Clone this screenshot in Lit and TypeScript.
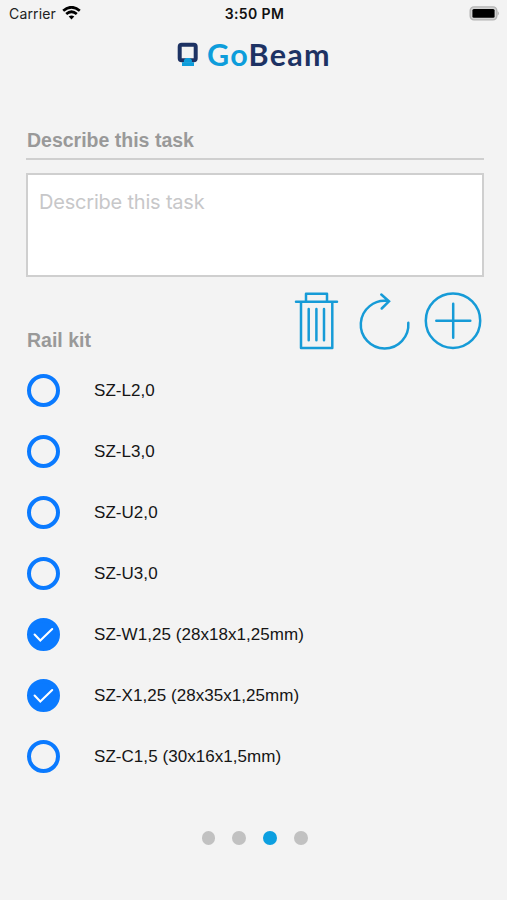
import { LitElement, html, css, svg } from "lit";
import { customElement, state } from "lit/decorators.js";
import { classMap } from "lit/directives/class-map.js";

interface Item { label: string; checked: boolean; }

@customElement("status-bar")
class StatusBar extends LitElement {
  static styles = css`
    :host { display: grid; grid-template-columns: 1fr auto 1fr; align-items: center; height: 28px; padding: 0 7px 0 9px;
      box-sizing: border-box; font: 14px/28px Inter, sans-serif; color: #222; }
    .carrier { display: flex; align-items: center; gap: 6px; letter-spacing: 0.15px; }
    .time { font-weight: 600; letter-spacing: 0.4px; color: #111; }
    .battery { justify-self: end; }
    svg { display: block; }
    .wifi { margin-top: -3px; }
    .battery { margin-top: -2px; }
  `;
  render() {
    return html`
      <div class="carrier"><span>Carrier</span>
        <svg class="wifi" width="19" height="14" viewBox="0 0 19 14" fill="none" stroke="#000" stroke-width="2.7">
          <path d="M1.2 4.8Q9.5-2.3 17.8 4.8"/><path d="M4.2 8Q9.5 3.5 14.8 8"/>
          <path d="M6.7 10.6Q9.5 8.3 12.3 10.6L9.5 13.6Z" fill="#000" stroke="none"/>
        </svg>
      </div>
      <div class="time">3:50 PM</div>
      <svg class="battery" width="31" height="15" viewBox="0 0 31 15">
        <rect x="1.2" y=".9" width="26.6" height="13" rx="3.8" fill="#d2d2d2" stroke="#b4b4b4" stroke-width="1.4"/>
        <rect x="3.4" y="3" width="22.2" height="8.8" rx="1.5" fill="#000"/>
        <path d="M28.7 5Q31 7.4 28.7 9.8Z" fill="#aaa"/>
      </svg>`;
  }
}

@customElement("brand-logo")
class BrandLogo extends LitElement {
  static styles = css`
    :host { display: flex; height: 50px; padding-left: 177px; align-items: flex-start; }
    svg { display: block; margin-top: 14px; flex: none; }
    .name { margin-left: 9px; font: 700 30.5px/36px Lato, sans-serif; margin-top: 8px; letter-spacing: 1.25px; color: #1d3263; }
    .go { color: #0d9ddb; }
  `;
  render() {
    return html`
      <svg width="21" height="25" viewBox="0 0 21 25">
        <rect x="2.7" y="2.7" width="16" height="15.6" rx="2" fill="none" stroke="#1d3263" stroke-width="4"/>
        <path d="M6.9 18 8.9 16h3.8l2.2 2v2.6h-8Z" fill="#0d9ddb"/>
        <path d="M5 20.2h12v3.8H5Z" fill="#0d9ddb"/>
      </svg>
      <div class="name"><span class="go">Go</span>Beam</div>`;
  }
}

@customElement("app-root")
class AppRoot extends LitElement {
  static styles = css`
    :host { display: flex; flex-direction: column; height: 900px; background: #f3f3f3; font-family: "Liberation Sans", Arial, sans-serif; overflow: hidden; }
    main { display: flex; flex-direction: column; padding: 0 23px 0 26px; }
    h2 { margin: 0; font-size: 19.5px; font-weight: 700; line-height: 25px; color: #999; letter-spacing: 0; padding-left: 1px; }
    .heading { margin-top: 50px; height: 30px; border-bottom: 2px solid #cfcfcf; }
    .field { margin-top: 13px; height: 104px; box-sizing: border-box; resize: none; border: 2px solid #cfcfcf; background: #fff;
      padding: 13px 11px; font: 20px/28px Inter, sans-serif; outline: none; border-radius: 0; letter-spacing: -0.2px; }
    .field::placeholder { color: #c7c7c9; opacity: 1; }
    .bar { display: flex; justify-content: space-between; height: 83px; }
    .bar h2 { margin-top: 51px; }
    .tools { display: flex; margin: 13px 2px 0 0; height: 62px; }
    .tools svg { display: block; fill: none; stroke: #169bd7; stroke-width: 2.5; stroke-linecap: round; }
    .row { display: flex; align-items: center; height: 61px; gap: 34px; font-size: 17px; color: #151515; padding-left: 1px; }
    .mark { width: 33px; height: 33px; box-sizing: border-box; border: 4px solid #0a7aff; border-radius: 50%; }
    .mark.on { background: #0a7aff; }
    .mark svg { display: block; margin: -4px; }
    .label { letter-spacing: 0.05px; }
    .dots { display: flex; gap: 17px; margin-top: 44px; padding-left: 201.5px; }
    .dot { width: 13.8px; height: 13.8px; border-radius: 50%; background: #c1c1c1; }
    .dot.current { background: #0c9fe0; }
  `;

  @state() items: Item[] = [
    { label: "SZ-L2,0", checked: false },
    { label: "SZ-L3,0", checked: false },
    { label: "SZ-U2,0", checked: false },
    { label: "SZ-U3,0", checked: false },
    { label: "SZ-W1,25 (28x18x1,25mm)", checked: true },
    { label: "SZ-X1,25 (28x35x1,25mm)", checked: true },
    { label: "SZ-C1,5 (30x16x1,5mm)", checked: false },
  ];

  toggle(index: number) {
    this.items = this.items.map((it, i) => (i === index ? { ...it, checked: !it.checked } : it));
  }

  icon(width: number, box: string, shape: unknown) {
    return html`<svg width=${width} height="62" viewBox=${box}>${shape}</svg>`;
  }

  render() {
    return html`
      <status-bar></status-bar>
      <brand-logo></brand-logo>
      <main>
        <h2 class="heading">Describe this task</h2>
        <textarea class="field" placeholder="Describe this task"></textarea>
        <div class="bar">
          <h2>Rail kit</h2>
          <div class="tools">
            ${this.icon(58, "292 290 58 62", svg`<path stroke-linejoin="round" d="M306 301.5v-7.7h21v7.7M296 301.7h41M301 302v46h31.3v-46M308.7 309v31.3M316.4 309v31.3M324 309v31.3"/>`)}
            ${this.icon(70, "350 290 70 62", svg`<path d="M408.3 322.8A23.8 23.8 0 1 1 388 301.1M381.3 294.5l7.7 6.8-7.3 7.2"/>`)}
            ${this.icon(62, "420 290 62 62", svg`<circle cx="453" cy="320.7" r="27.2"/><path d="M436.3 320.7h34M453.2 303.8v34"/>`)}
          </div>
        </div>
        ${this.items.map((it, i) => html`
          <div class="row" @click=${() => this.toggle(i)}>
            <div class=${classMap({ mark: true, on: it.checked })}>
              ${it.checked ? html`<svg width="33" height="33" viewBox="0 0 33 33" fill="none" stroke="#fff" stroke-width="2.1" stroke-linecap="round"><path d="M7.6 16.6l5.7 5.8L25.2 11"/></svg>` : ""}
            </div>
            <div class="label">${it.label}</div>
          </div>`)}
      </main>
      <div class="dots">
        ${[0, 1, 2, 3].map((i) => html`<div class=${classMap({ dot: true, current: i === 2 })}></div>`)}
      </div>`;
  }
}
